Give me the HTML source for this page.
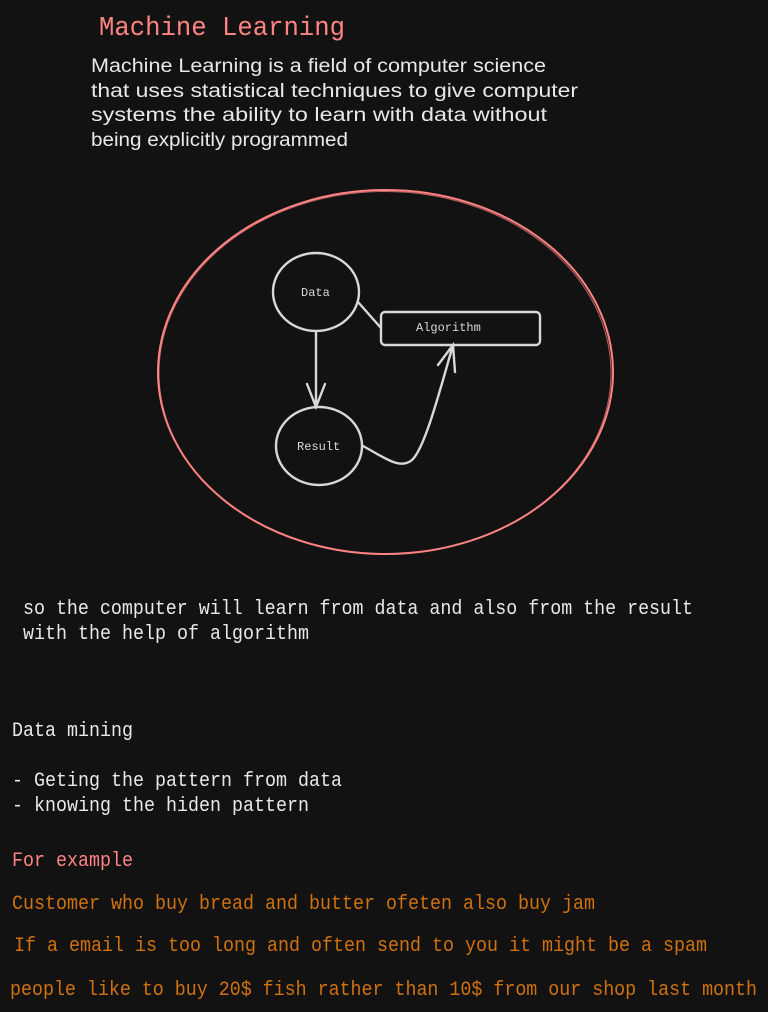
<!DOCTYPE html>
<html><head><meta charset="utf-8"><style>
html,body{margin:0;padding:0;background:#121212;}
svg{display:block}
.m{font-family:"Liberation Mono",monospace;}
.h{font-family:"Liberation Sans",sans-serif;}
</style></head><body>
<svg width="768" height="1012" viewBox="0 0 768 1012" xmlns="http://www.w3.org/2000/svg">
<rect width="768" height="1012" fill="#121212"/>
<text x="99" y="35" class="m" font-size="27" fill="#ff8383" textLength="246" lengthAdjust="spacingAndGlyphs">Machine Learning</text>
<g class="h" font-size="19" fill="#e8e8e8">
<text x="91" y="72" textLength="455" lengthAdjust="spacingAndGlyphs">Machine Learning is a field of computer science</text>
<text x="91" y="97" textLength="487" lengthAdjust="spacingAndGlyphs">that uses statistical techniques to give computer</text>
<text x="91" y="121" textLength="456" lengthAdjust="spacingAndGlyphs">systems the ability to learn with data without</text>
<text x="91" y="146" textLength="257" lengthAdjust="spacingAndGlyphs">being explicitly programmed</text>
</g>
<g fill="none" stroke="#ff8383" stroke-width="2">
<ellipse cx="385.5" cy="372" rx="227.5" ry="182"/>
<ellipse cx="385" cy="373" rx="226" ry="181.5" stroke-width="1" opacity="0.7"/>
</g>
<g fill="none" stroke="#d8d8d8" stroke-width="2.4" stroke-linecap="round">
<ellipse cx="316" cy="292" rx="43" ry="39"/>
<ellipse cx="319" cy="446" rx="43" ry="39"/>
<rect x="381" y="312" width="159" height="33" rx="4"/>
<path d="M358 302 L381 328"/>
<path d="M316 333 L316 407 M307 384 L316 407 L325 384"/>
<path d="M363 446 C385 458 400 470 412 460 C425 448 440 390 453 345 M438 365 L453 345 L455 372"/>
</g>
<g class="m" font-size="12" fill="#d8d8d8">
<text x="301" y="296">Data</text>
<text x="297" y="450">Result</text>
<text x="416" y="331">Algorithm</text>
</g>
<g class="m" font-size="20" fill="#e8e8e8">
<text x="23" y="614" textLength="670" lengthAdjust="spacingAndGlyphs">so the computer will learn from data and also from the result</text>
<text x="23" y="639" textLength="286" lengthAdjust="spacingAndGlyphs">with the help of algorithm</text>
<text x="12" y="736" textLength="121" lengthAdjust="spacingAndGlyphs">Data mining</text>
<text x="12" y="786" textLength="330" lengthAdjust="spacingAndGlyphs">- Geting the pattern from data</text>
<text x="12" y="811" textLength="297" lengthAdjust="spacingAndGlyphs">- knowing the hiden pattern</text>
</g>
<g class="m" font-size="20">
<text x="12" y="866" fill="#ff8383" textLength="121" lengthAdjust="spacingAndGlyphs">For example</text>
<g fill="#d0710e">
<text x="12" y="909" textLength="583" lengthAdjust="spacingAndGlyphs">Customer who buy bread and butter ofeten also buy jam</text>
<text x="14" y="951" textLength="693" lengthAdjust="spacingAndGlyphs">If a email is too long and often send to you it might be a spam</text>
<text x="10" y="995" textLength="747" lengthAdjust="spacingAndGlyphs">people like to buy 20$ fish rather than 10$ from our shop last month</text>
</g>
</g>
</svg>
</body></html>
